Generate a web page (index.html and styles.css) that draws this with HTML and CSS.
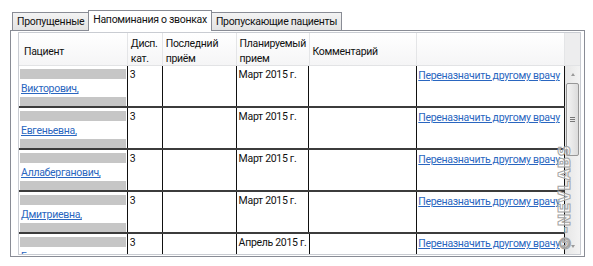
FILE: index.html
```html
<!DOCTYPE html>
<html lang="ru">
<head>
    <meta charset="UTF-8">
    <title>Напоминания о звонках</title>
    <link rel="stylesheet" href="styles.css">
</head>
<body>
    <!-- Tabs -->
    <div class="tabs">
        <div class="tab">Пропущенные</div>
        <div class="tab active">Напоминания о звонках</div>
        <div class="tab">Пропускающие пациенты</div>
    </div>

    <div class="panel">
        <div class="grid">
            <div class="head">
                <div class="hc c-name">Пациент</div>
                <div class="hc c-disp">Дисп.<br>кат.</div>
                <div class="hc c-last">Последний<br>приём</div>
                <div class="hc c-plan">Планируемый<br>прием</div>
                <div class="hc c-comm">Комментарий</div>
                <div class="hc c-act"></div>
                <div class="hc c-fill"></div>
            </div>
            <div class="body">
                <div class="rows" id="rows"></div>
                <div class="scroll">
                    <div class="arrow up"></div>
                    <div class="track">
                        <div class="thumb"><span class="grip"></span></div>
                    </div>
                    <div class="arrow down"></div>
                </div>
            </div>
        </div>
        <div class="mark">©-NEVLABS</div>
    </div>

    <script>
        let patients = [
            { name: "Викторович,", plan: "Март 2015 г." },
            { name: "Евгеньевна,", plan: "Март 2015 г." },
            { name: "Аллаберганович,", plan: "Март 2015 г." },
            { name: "Дмитриевна,", plan: "Март 2015 г." },
            { name: "Борисович,", plan: "Апрель 2015 г." }
        ];

        let rows = document.getElementById('rows');
        patients.forEach(p => {
            let row = document.createElement('div');
            row.className = 'row';
            row.innerHTML = `
                <div class="cell c-name">
                    <div class="bar"></div>
                    <a href="#" class="link">${p.name}</a>
                    <div class="bar"></div>
                </div>
                <div class="cell c-disp">3</div>
                <div class="cell c-last"></div>
                <div class="cell c-plan">${p.plan}</div>
                <div class="cell c-comm"></div>
                <div class="cell c-act"><a href="#" class="link">Переназначить другому врачу</a></div>`;
            rows.appendChild(row);
        });
    </script>
</body>
</html>
```

FILE: styles.css
```css
body {
    margin: 0;
    background: #fff;
    font-family: Roboto, "Noto Sans", sans-serif;
    font-size: 10.5px;
    letter-spacing: -0.3px;
    color: #111;
}

.tabs {
    display: flex;
    align-items: flex-end;
    margin-left: 12px;
    padding-top: 10px;
}
.tab {
    height: 17px;
    line-height: 17px;
    padding: 0 4px;
    border: 1px solid #898c95;
    border-bottom: none;
    background: linear-gradient(#f3f3f3, #e3e3e3);
    white-space: nowrap;
}
.tab + .tab { margin-left: -1px; }
.tab.active {
    height: 20px;
    line-height: 18px;
    padding: 0 4px;
    background: #fff;
    margin-bottom: -1px;
    position: relative;
    z-index: 1;
}

.panel {
    position: relative;
    margin-left: 10px;
    width: 563px;
    height: 223px;
    border: 1px solid #898c95;
    padding: 1px 3px 1px 7px;
}

.grid {
    height: 221px;
    border: 1px solid #c9ccd2;
    display: flex;
    flex-direction: column;
    overflow: hidden;
}

.c-name { width: 109px; }
.c-disp { width: 35px; }
.c-last { width: 74px; }
.c-plan { width: 73px; }
.c-comm { width: 108px; }
.c-act  { width: 148px; }
.c-fill { width: 15px; }

.head {
    display: flex;
    height: 32px;
    flex: none;
    background: linear-gradient(#ffffff, #f5f5f6);
    border-bottom: 1px solid #e2e3e5;
}
.hc {
    box-sizing: border-box;
    display: flex;
    align-items: center;
    padding: 4px 3px 0;
    line-height: 15px;
    border-right: 1px solid #e4e5e7;
    white-space: nowrap;
}
.head .c-name { padding-left: 5px; }
.head .c-fill {
    border-right: none;
    background: #ededee;
}

.body {
    display: flex;
    flex: 1;
    min-height: 0;
}
.rows {
    width: 547px;
    overflow: hidden;
}
.row {
    display: flex;
    height: 40px;
    border-bottom: 2px solid #3c3c3c;
}
.cell {
    box-sizing: border-box;
    border-right: 1px solid #111;
    padding: 1px 2px;
    line-height: 15px;
    white-space: nowrap;
}
.cell.c-name {
    padding: 3px 1px 0 1px;
}
.bar {
    height: 10px;
    background: #c6c6c6;
}
.cell.c-name .link {
    display: block;
    height: 18px;
    line-height: 19px;
    padding-left: 1px;
}
.cell.c-name .bar + .link + .bar { height: 9px; }
.cell.c-act { padding: 2px 1px; }

.link {
    color: #2a66c0;
    text-decoration: underline;
}

.scroll {
    width: 15px;
    display: flex;
    flex-direction: column;
    background: linear-gradient(90deg, #e6e6e6, #f3f3f3);
}
.arrow {
    height: 16px;
    flex: none;
    display: flex;
    align-items: center;
    justify-content: center;
}
.arrow::before {
    content: "";
    border-left: 2px solid transparent;
    border-right: 2px solid transparent;
}
.arrow.up::before { border-bottom: 3px solid #9a9a9a; }
.arrow.down::before { border-top: 3px solid #9a9a9a; }
.track {
    flex: 1;
    padding-top: 1px;
}
.thumb {
    margin: 0 1px;
    height: 71px;
    border: 1px solid #979797;
    border-radius: 2px;
    background: linear-gradient(90deg, #f4f4f4, #dcdcdc);
    display: flex;
    align-items: center;
    justify-content: center;
}
.grip {
    width: 5px;
    height: 5px;
    background: repeating-linear-gradient(#777 0 1px, transparent 1px 2px);
}

.mark {
    position: absolute;
    right: 11px;
    bottom: 4px;
    writing-mode: vertical-rl;
    transform: rotate(180deg);
    font-family: "DejaVu Sans", sans-serif;
    font-weight: bold;
    font-size: 15px;
    line-height: 16px;
    letter-spacing: 0.5px;
    color: rgba(255, 255, 255, 0.6);
    -webkit-text-stroke: 1px #a3a3a3;
}
```
